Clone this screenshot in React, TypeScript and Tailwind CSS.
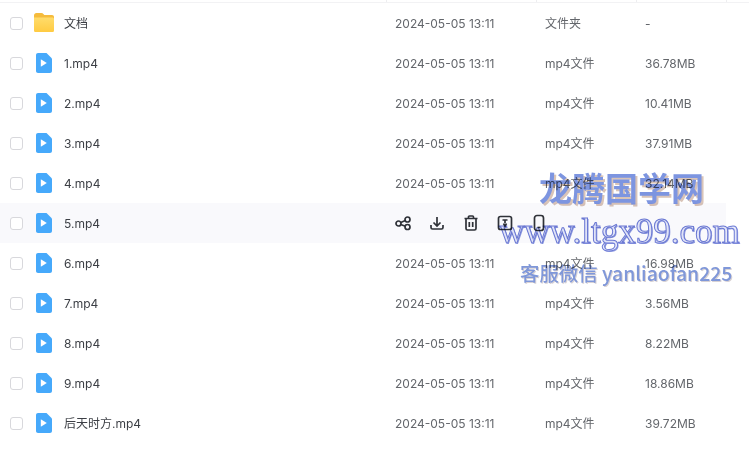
const sans = 'font-["Inter","Noto_Sans_CJK_SC",sans-serif]';

const rows = [
  { name: "文档", type: "文件夹", size: "-", folder: true },
  { name: "1.mp4", type: "mp4文件", size: "36.78MB" },
  { name: "2.mp4", type: "mp4文件", size: "10.41MB" },
  { name: "3.mp4", type: "mp4文件", size: "37.91MB" },
  { name: "4.mp4", type: "mp4文件", size: "32.14MB" },
  { name: "5.mp4", type: "", size: "", hover: true },
  { name: "6.mp4", type: "mp4文件", size: "16.98MB" },
  { name: "7.mp4", type: "mp4文件", size: "3.56MB" },
  { name: "8.mp4", type: "mp4文件", size: "8.22MB" },
  { name: "9.mp4", type: "mp4文件", size: "18.86MB" },
  { name: "后天时方.mp4", type: "mp4文件", size: "39.72MB" },
];

function FolderIcon() {
  return (
    <svg width="22" height="20" viewBox="0 0 22 20">
      <defs>
        <linearGradient id="fold" x1="0" y1="0" x2="0" y2="1">
          <stop offset="0" stopColor="#ffdc6b" />
          <stop offset="1" stopColor="#ffcb42" />
        </linearGradient>
      </defs>
      <path d="M1 2.500C1 1 2 0 3.400 0h5c.9 0 1.500.4 2 1l.9 1H19c1.200 0 2 .8 2 2v2H1z" fill="#f5bb3c" />
      <path d="M1 4.500h18.400c.9 0 1.600.7 1.600 1.600v11.300c0 1-.8 1.600-1.700 1.600H2.700C1.700 19 1 18.400 1 17.400z" fill="url(#fold)" />
    </svg>
  );
}

function VideoIcon() {
  return (
    <svg width="16" height="20" viewBox="0 0 16 20">
      <path d="M2 0H10.500L16 5.500V18c0 1.100-.9 2-2 2H2c-1.100 0-2-.9-2-2V2C0 .9.900 0 2 0z" fill="#46a9fb" />
      <path d="M4.800 6.200v7.600l6-3.800z" fill="#fff" />
    </svg>
  );
}

function Actions() {
  const cls = "w-[18px] h-[18px] fill-none stroke-[#2f3238] stroke-[1.7]";
  return (
    <div className="flex items-center gap-4 ml-[-1px]">
      <svg viewBox="0 0 18 18" className={cls}>
        <circle cx="4.500" cy="9.500" r="2.500" />
        <circle cx="13.500" cy="5.500" r="2.500" />
        <circle cx="13.500" cy="13" r="2.500" />
        <path d="M6.800 8.500l4.500-2M6.800 10.500l4.500 1.800" />
      </svg>
      <svg viewBox="0 0 18 18" className={cls}>
        <path d="M9 3v8.500M5.500 8.500L9 12l3.500-3.500M3 11v2.500c0 1 .7 1.500 1.500 1.500h9c.8 0 1.500-.5 1.500-1.500V11" />
      </svg>
      <svg viewBox="0 0 18 18" className={cls}>
        <path d="M2.500 4.500h13M6.500 4.500V3c0-.6.4-1 1-1h3c.6 0 1 .4 1 1v1.500M4 4.500v10c0 1 .6 1.500 1.500 1.500h7c.9 0 1.500-.5 1.500-1.500v-10M7.300 8v5M10.700 8v5" />
      </svg>
      <svg viewBox="0 0 18 18" className={cls}>
        <rect x="2.500" y="2.500" width="13" height="13" rx="2" />
        <path d="M6.500 6h5M9 6v3M7.500 9.500L9 12l1.500-2.500" />
      </svg>
      <svg viewBox="0 0 18 18" className={cls}>
        <rect x="4.500" y="1.500" width="9" height="15" rx="2.500" />
        <path d="M7.500 13.500h3" />
      </svg>
    </div>
  );
}

export default function App() {
  return (
    <div className={`relative w-[749px] h-[465px] bg-white overflow-hidden ${sans}`}>
      <div className="flex h-[3px] w-full border-b border-[#f2f2f4]">
        <div className="w-[387px] border-r border-[#eeeef0]" />
        <div className="w-[150px] border-r border-[#eeeef0]" />
        <div className="w-[100px] border-r border-[#eeeef0]" />
        <div className="w-[90px] border-r border-[#eeeef0]" />
      </div>
      {rows.map((r) => (
        <div
          key={r.name}
          className={`flex items-center h-10 w-[726px] text-[12px] ${r.hover ? "bg-[#f9f9fc]" : ""}`}
        >
          <div className="w-[33px] pl-[10px] shrink-0">
            <div className="w-[13px] h-[13px] rounded-[3px] border border-[#d8d8dc] bg-white" />
          </div>
          <div className="w-[22px] mr-[9px] shrink-0 flex justify-center">
            {r.folder ? <FolderIcon /> : <VideoIcon />}
          </div>
          <div className="w-[331px] pt-0.5 shrink-0 text-[#3c3f45]">{r.name}</div>
          {r.hover ? (
            <Actions />
          ) : (
            <>
              <div className="w-[150px] pt-0.5 shrink-0 text-[#63666b]">2024-05-05 13:11</div>
              <div className="w-[100px] pt-0.5 shrink-0 text-[#63666b]">{r.type}</div>
              <div className="pt-0.5 text-[#63666b]">{r.size}</div>
            </>
          )}
        </div>
      ))}
      <div className="absolute left-[539px] top-[166px] text-[33px] leading-[42px] font-bold text-[#7d95e0] [text-shadow:2px_2px_0_#d9c4b8] font-['Noto_Sans_CJK_SC',sans-serif] mix-blend-multiply">
        龙腾国学网
      </div>
      <div className="absolute left-[499px] top-[211px] text-[35px] leading-[42px] text-[#e6e9fa] [-webkit-text-stroke:1px_#6d7bd6] [text-shadow:1px_1px_0_#8f9be0] font-['Liberation_Serif',serif] mix-blend-multiply whitespace-nowrap">
        www.ltgx99.com
      </div>
      <div className="absolute left-[520px] top-[259px] text-[19.4px] leading-[28px] font-medium text-[#7f97d9] [text-shadow:1px_1px_0_#d8d2d4] font-['Noto_Sans_CJK_SC',sans-serif] whitespace-nowrap mix-blend-multiply">
        客服微信 yanliaofan225
      </div>
    </div>
  );
}
